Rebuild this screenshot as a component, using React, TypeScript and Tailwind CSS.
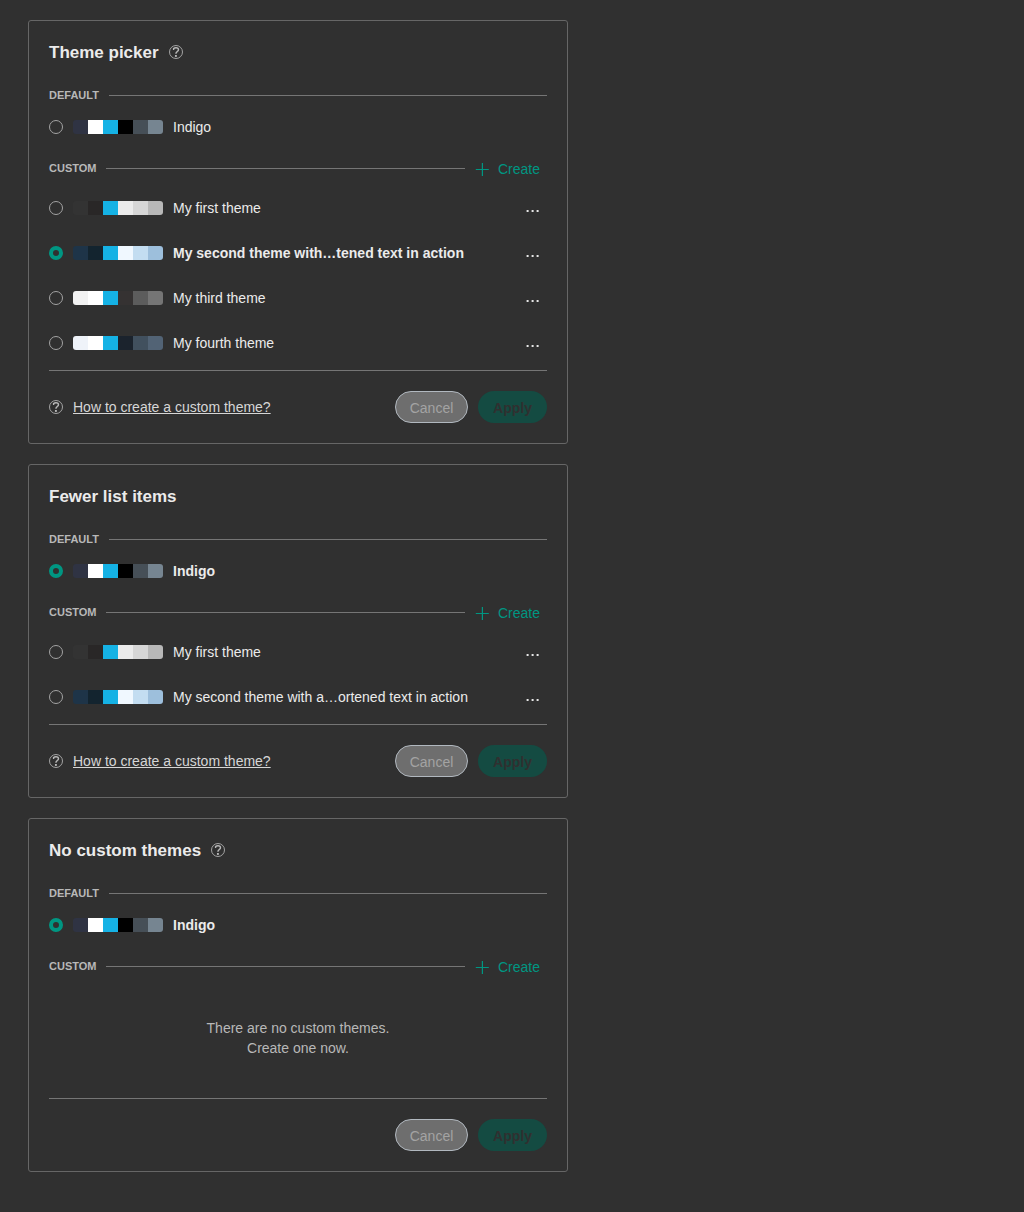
type Theme = { name: string; colors: string[] };

const indigo: Theme = { name: "Indigo", colors: ["#2f3343", "#ffffff", "#15b2e5", "#000000", "#464f57", "#768591"] };
const firstColors = ["#333333", "#292727", "#15b2e5", "#ebebeb", "#d6d6d6", "#b8b8b8"];
const secondColors = ["#1e3448", "#13242f", "#15b2e5", "#f0f8ff", "#c3ddf1", "#9dbfdc"];
const thirdColors = ["#f2f2f2", "#ffffff", "#15b2e5", "#353232", "#5c5c5c", "#757575"];
const fourthColors = ["#eff3f9", "#ffffff", "#15b2e5", "#1b232d", "#41505e", "#526375"];

function HelpIcon() {
  return (
    <svg width="14" height="14" viewBox="0 0 14 14" fill="none" className="shrink-0 text-[#b8b8b8]">
      <circle cx="7" cy="7" r="6.5" stroke="currentColor" strokeWidth="0.85" />
      <path d="M4.6 4.9V3.6C5.2 3 6 2.7 7 2.7C8.6 2.7 9.5 3.5 9.5 4.7C9.5 6.5 6.9 6.6 6.9 8.8" stroke="currentColor" strokeWidth="1.4" />
      <path d="M6.9 10V11.9" stroke="currentColor" strokeWidth="1.9" />
    </svg>
  );
}

function Label({ children }: { children: string }) {
  return <span className="text-[11px] leading-[13px] font-bold text-[#b8b8b8]">{children}</span>;
}

function ThemeRow({ theme, selected, menu }: { theme: Theme; selected: boolean; menu?: boolean }) {
  return (
    <div className="flex h-11 items-center">
      <span
        className={
          selected
            ? "size-[14px] shrink-0 rounded-full border-4 border-[#009682]"
            : "size-[14px] shrink-0 rounded-full border border-[#a3a3a3]"
        }
      />
      <span className="ml-[10px] flex h-[14px] shrink-0 overflow-hidden rounded-[3px]">
        {theme.colors.map((c, i) => (
          <span key={i} className="w-[15px]" style={{ backgroundColor: c }} />
        ))}
      </span>
      <span className={selected ? "ml-[10px] flex-1 font-bold" : "ml-[10px] flex-1"}>{theme.name}</span>
      {menu && (
        <svg width="14" height="4" viewBox="0 0 14 4" fill="#e6e6e6" className="mt-[6px] mr-[7px]">
          <rect x="0.6" y="1" width="2" height="2" />
          <rect x="5.6" y="1" width="2" height="2" />
          <rect x="10.6" y="1" width="2" height="2" />
        </svg>
      )}
    </div>
  );
}

function Picker({ title, help, themes, selected }: { title: string; help?: boolean; themes: Theme[]; selected: number }) {
  return (
    <section className="w-[540px] rounded-[3px] border border-[#666666] p-5">
      <div className="flex h-[22px] items-center gap-[10px]">
        <h2 className="pt-[2px] text-[17px] leading-[22px] font-bold">{title}</h2>
        {help && <HelpIcon />}
      </div>
      <div className="mt-[22px] flex h-[21px] items-center gap-[10px]">
        <Label>DEFAULT</Label>
        <span className="h-px flex-1 bg-[#757575]" />
      </div>
      <div className="-mt-px">
        <ThemeRow theme={indigo} selected={selected === 0} />
      </div>
      <div className="mt-[2px] flex h-[35px] items-center gap-[10px]">
        <Label>CUSTOM</Label>
        <span className="h-px flex-1 bg-[#757575]" />
        <button className="mr-[7px] flex items-center pt-px text-[#009682]">
          <svg width="14" height="14" viewBox="0 0 14 14" className="mr-[9px]" stroke="currentColor" strokeWidth="1.2">
            <path d="M7.4 1V14M.8 7.5H13.8" />
          </svg>
          Create
        </button>
      </div>
      {themes.length > 0 ? (
        <div className="flex flex-col gap-px pb-[5px]">
          {themes.map((t, i) => (
            <ThemeRow key={i} theme={t} selected={selected === i + 1} menu />
          ))}
        </div>
      ) : (
        <div className="pt-[34px] pb-10 text-center text-[#b8b8b8]">
          There are no custom themes.
          <br />
          Create one now.
        </div>
      )}
      <div className="flex items-center border-t border-[#757575] pt-5">
        {themes.length > 0 && (
          <>
            <HelpIcon />
            <a className="ml-[10px] text-[#d6d6d6] underline">How to create a custom theme?</a>
          </>
        )}
        <button className="ml-auto h-8 w-[73px] rounded-full border border-[#b1b8bf] bg-[#6e6e6e] pt-px text-[#a3a3a3]">Cancel</button>
        <button className="ml-[10px] h-8 w-[69px] rounded-full bg-[#144b42] pt-px font-bold text-[#303030]">Apply</button>
      </div>
    </section>
  );
}

export default function App() {
  const first = { name: "My first theme", colors: firstColors };
  return (
    <main className="flex min-h-screen flex-col gap-5 bg-[#303030] px-7 pt-5 font-['Liberation_Sans',Arial,sans-serif] text-[14px] leading-5 text-[#ebebeb]">
      <Picker
        title="Theme picker"
        help
        selected={2}
        themes={[
          first,
          { name: "My second theme with…tened text in action", colors: secondColors },
          { name: "My third theme", colors: thirdColors },
          { name: "My fourth theme", colors: fourthColors },
        ]}
      />
      <Picker
        title="Fewer list items"
        selected={0}
        themes={[first, { name: "My second theme with a…ortened text in action", colors: secondColors }]}
      />
      <Picker title="No custom themes" help selected={0} themes={[]} />
    </main>
  );
}
